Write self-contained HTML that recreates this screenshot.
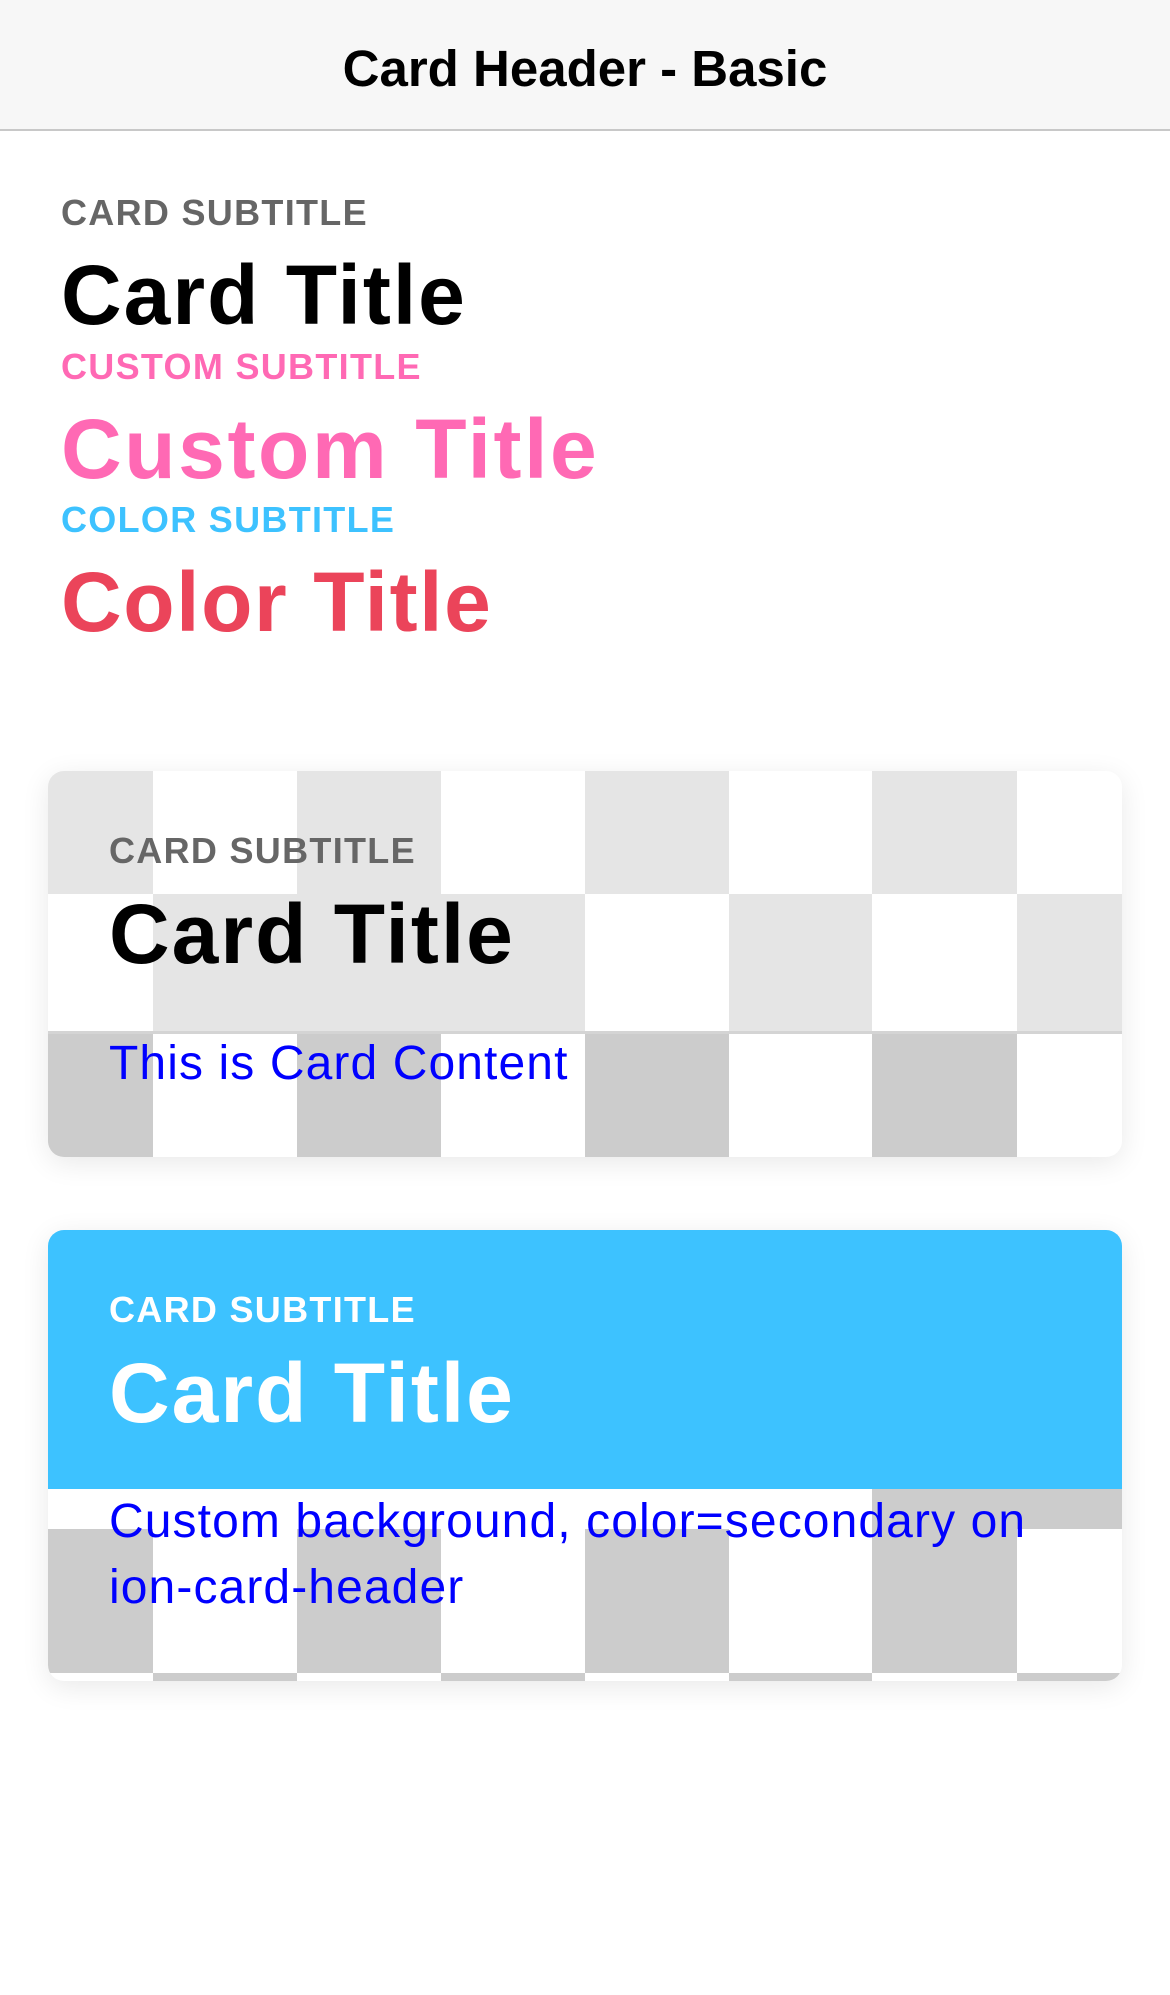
<!DOCTYPE html>
<html><head><meta charset="utf-8"><style>
*{margin:0;padding:0;box-sizing:border-box}
html,body{width:1170px;height:1995px;background:#fff;overflow:hidden;font-family:"Liberation Sans",Arial,sans-serif}
.a{position:absolute;line-height:1;white-space:nowrap}
.hdr{position:absolute;left:0;top:0;width:1170px;height:131px;background:#f7f7f7;border-bottom:2px solid #c8c8c8}
.sub{font-size:36px;font-weight:bold;letter-spacing:1.3px}
.tit{font-size:84px;font-weight:bold;letter-spacing:2px}
.card{position:absolute;left:48px;width:1074px;border-radius:16px;overflow:hidden;box-shadow:0 6px 28px rgba(0,0,0,0.09)}
.c{position:absolute}
.cnt{font-size:48px;color:#0000ff;letter-spacing:1.1px}
</style></head><body>
<div class="hdr"></div>
<div class="a" style="left:0;width:1170px;text-align:center;top:43px;font-size:51px;font-weight:bold;color:#000">Card Header - Basic</div>

<div class="a sub" style="left:61px;top:195px;color:#666">CARD SUBTITLE</div>
<div class="a tit" style="left:61px;top:253px;color:#000">Card Title</div>
<div class="a sub" style="left:61px;top:349px;color:#ff69b4">CUSTOM SUBTITLE</div>
<div class="a tit" style="left:61px;top:407px;color:#ff69b4;letter-spacing:2.6px">Custom Title</div>
<div class="a sub" style="left:61px;top:502px;color:#3dc2ff">COLOR SUBTITLE</div>
<div class="a tit" style="left:61px;top:560px;color:#eb445a;letter-spacing:1.6px">Color Title</div>

<!-- card 1 -->
<div class="card" style="top:771px;height:386px">
 <!-- row1 0-123 -->
 <div class="c" style="left:0;top:0;width:105px;height:123px;background:#e5e5e5"></div>
 <div class="c" style="left:249px;top:0;width:144px;height:123px;background:#e5e5e5"></div>
 <div class="c" style="left:537px;top:0;width:144px;height:123px;background:#e5e5e5"></div>
 <div class="c" style="left:824px;top:0;width:145px;height:123px;background:#e5e5e5"></div>
 <!-- row2 123-263 -->
 <div class="c" style="left:105px;top:123px;width:432px;height:140px;background:#e5e5e5"></div>
 <div class="c" style="left:681px;top:123px;width:143px;height:140px;background:#e5e5e5"></div>
 <div class="c" style="left:969px;top:123px;width:105px;height:140px;background:#e5e5e5"></div>
 <div class="c" style="left:0;top:260px;width:1074px;height:3px;background:#d4d4d4"></div>
 <!-- row3 263-386 -->
 <div class="c" style="left:0;top:263px;width:105px;height:123px;background:#ccc"></div>
 <div class="c" style="left:249px;top:263px;width:144px;height:123px;background:#ccc"></div>
 <div class="c" style="left:537px;top:263px;width:144px;height:123px;background:#ccc"></div>
 <div class="c" style="left:824px;top:263px;width:145px;height:123px;background:#ccc"></div>
 <div class="a sub" style="left:61px;top:62px;color:#666">CARD SUBTITLE</div>
 <div class="a tit" style="left:61px;top:121px;color:#000">Card Title</div>
 <div class="a cnt" style="left:61px;top:269px">This is Card Content</div>
</div>

<!-- card 2 -->
<div class="card" style="top:1230px;height:451px;background:#fff">
 <div class="c" style="left:0;top:0;width:1074px;height:259px;background:#3dc2ff"></div>
 <div class="c" style="left:824px;top:259px;width:250px;height:40px;background:#ccc"></div>
 <div class="c" style="left:0;top:299px;width:105px;height:144px;background:#ccc"></div>
 <div class="c" style="left:249px;top:299px;width:144px;height:144px;background:#ccc"></div>
 <div class="c" style="left:537px;top:299px;width:144px;height:144px;background:#ccc"></div>
 <div class="c" style="left:824px;top:299px;width:145px;height:144px;background:#ccc"></div>
 <div class="c" style="left:105px;top:443px;width:144px;height:8px;background:#ccc"></div>
 <div class="c" style="left:393px;top:443px;width:144px;height:8px;background:#ccc"></div>
 <div class="c" style="left:681px;top:443px;width:143px;height:8px;background:#ccc"></div>
 <div class="c" style="left:969px;top:443px;width:105px;height:8px;background:#ccc"></div>
 <div class="a sub" style="left:61px;top:62px;color:#fff">CARD SUBTITLE</div>
 <div class="a tit" style="left:61px;top:121px;color:#fff">Card Title</div>
 <div class="a cnt" style="left:61px;top:268px">Custom background, color=secondary on</div>
 <div class="a cnt" style="left:61px;top:334px">ion-card-header</div>
</div>
</body></html>
